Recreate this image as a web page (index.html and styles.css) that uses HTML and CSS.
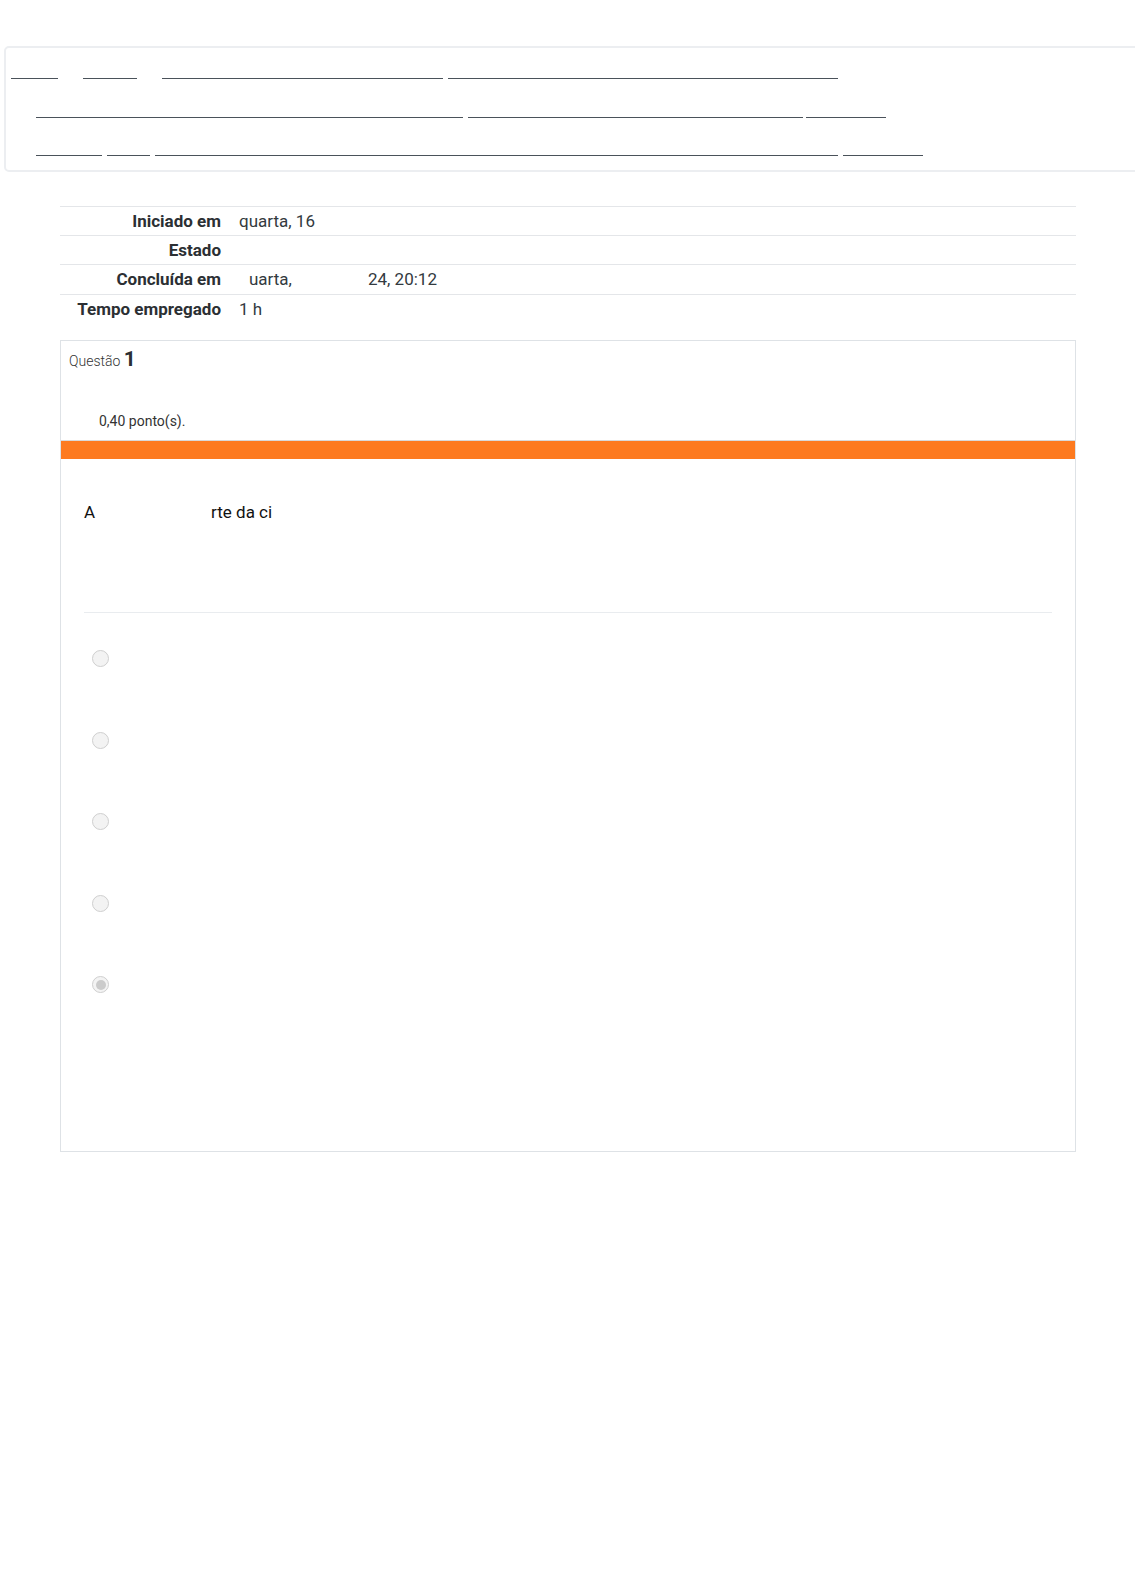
FILE: index.html
```html
<!DOCTYPE html>
<html lang="pt">
<head>
<meta charset="utf-8">
<title>Revisão da tentativa</title>
<link rel="stylesheet" href="styles.css">
</head>
<body>
<nav class="crumbs">
  <div class="crow r1">
    <a class="lk w47" href="#"></a>
    <a class="lk w54 g25" href="#"></a>
    <a class="lk w281 g25" href="#"></a>
    <a class="lk w390 g5" href="#"></a>
  </div>
  <div class="crow r2">
    <a class="lk w427" href="#"></a>
    <a class="lk w335 g5" href="#"></a>
    <a class="lk w80 g3" href="#"></a>
  </div>
  <div class="crow r2">
    <a class="lk w66" href="#"></a>
    <a class="lk w43 g5" href="#"></a>
    <a class="lk w683 g5" href="#"></a>
    <a class="lk w80 g5" href="#"></a>
  </div>
</nav>

<main class="page">
  <div class="summary">
    <div class="srow">
      <div class="lbl">Iniciado em</div>
      <div class="val">quarta, 16</div>
    </div>
    <div class="srow">
      <div class="lbl">Estado</div>
      <div class="val"></div>
    </div>
    <div class="srow">
      <div class="lbl">Concluída em</div>
      <div class="val"><span class="v-a">uarta,</span><span class="v-b">24, 20:12</span></div>
    </div>
    <div class="srow">
      <div class="lbl">Tempo empregado</div>
      <div class="val">1 h</div>
    </div>
  </div>

  <section class="question">
    <div class="qinfo">
      <h3 class="qno">Questão <span class="qnum">1</span></h3>
      <div class="grade">0,40 ponto(s).</div>
    </div>
    <div class="qbar"></div>
    <div class="qcontent">
      <p class="qtext"><span class="qa">A</span><span class="qb">rte da ci</span></p>
      <div class="answers">
        <div class="ans"><span class="radio"></span></div>
        <div class="ans"><span class="radio"></span></div>
        <div class="ans"><span class="radio"></span></div>
        <div class="ans"><span class="radio"></span></div>
        <div class="ans"><span class="radio checked"></span></div>
      </div>
    </div>
  </section>
</main>
</body>
</html>
```

FILE: styles.css
```css
html, body {
  margin: 0;
  padding: 0;
  overflow-x: hidden;
  background: #ffffff;
}

body {
  font-family: Roboto, "Liberation Sans", Arial, sans-serif;
  color: #1d2125;
}

/* breadcrumb box */
.crumbs {
  margin: 46px 0 0 4px;
  width: 1160px;
  border: 2px solid #eceef1;
  border-radius: 5px;
  padding: 0 0 6.5px 0;
  box-sizing: content-box;
}

.crow {
  display: flex;
  align-items: flex-start;
  height: 38.5px;
}

.crow.r1 { padding-left: 5px; }
.crow.r2 { padding-left: 30px; }

.lk {
  display: block;
  height: 30px;
  border-bottom: 1px solid #4a525a;
}

.g25 { margin-left: 25px; }
.g5 { margin-left: 5px; }
.g3 { margin-left: 3px; }

.w43 { width: 43px; }
.w47 { width: 47px; }
.w54 { width: 54px; }
.w66 { width: 66px; }
.w80 { width: 80px; }
.w281 { width: 281px; }
.w335 { width: 335px; }
.w390 { width: 390px; }
.w427 { width: 427px; }
.w683 { width: 683px; }

/* main */
.page {
  margin: 34px 0 0 60px;
  width: 1016px;
}

.summary {
  display: flex;
  flex-direction: column;
}

.srow {
  display: grid;
  grid-template-columns: 169px 1fr;
  height: 28.2px;
  line-height: 28.2px;
  border-top: 1px solid #e4e6e9;
  font-size: 17px;
  color: #333a40;
}

.lbl {
  text-align: right;
  padding-right: 8px;
  font-weight: 700;
  color: #2b2f33;
}

.val {
  padding-left: 10px;
}

.v-a { padding-left: 10px; }
.v-b { padding-left: 76px; }

/* question */
.question {
  margin-top: 17px;
  border: 1px solid #dee2e6;
  height: 810px;
  display: flex;
  flex-direction: column;
}

.qinfo {
  height: 99px;
  padding: 0 8px;
}

.qno {
  margin: 0;
  padding-top: 6px;
  font-size: 14px;
  font-weight: 300;
  color: #333;
  line-height: 24px;
}

.qnum {
  font-size: 21px;
  font-weight: 700;
  color: #2b2f33;
}

.grade {
  margin-top: 38px;
  padding-left: 30px;
  font-size: 14px;
  line-height: 20px;
  color: #333;
}

.qbar {
  height: 18px;
  background: #fd7a1f;
  border-top: 1px solid #d9d9d9;
}

.qcontent {
  padding: 0 23px;
}

.qtext {
  margin: 41px 0 0 0;
  font-size: 17px;
  line-height: 24px;
  color: #111;
  padding-bottom: 88px;
  border-bottom: 1px solid #e9ecef;
}

.qb { padding-left: 116px; }

.answers {
  margin-top: 5px;
  display: flex;
  flex-direction: column;
}

.ans {
  height: 81.5px;
  display: flex;
  align-items: center;
  padding-left: 8px;
}

.radio {
  width: 15px;
  height: 15px;
  border: 1px solid #cfcfcf;
  border-radius: 50%;
  background: #f3f3f3;
  display: flex;
  align-items: center;
  justify-content: center;
}

.radio.checked::after {
  content: "";
  width: 10px;
  height: 10px;
  border-radius: 50%;
  background: #cbcbcb;
}
```
